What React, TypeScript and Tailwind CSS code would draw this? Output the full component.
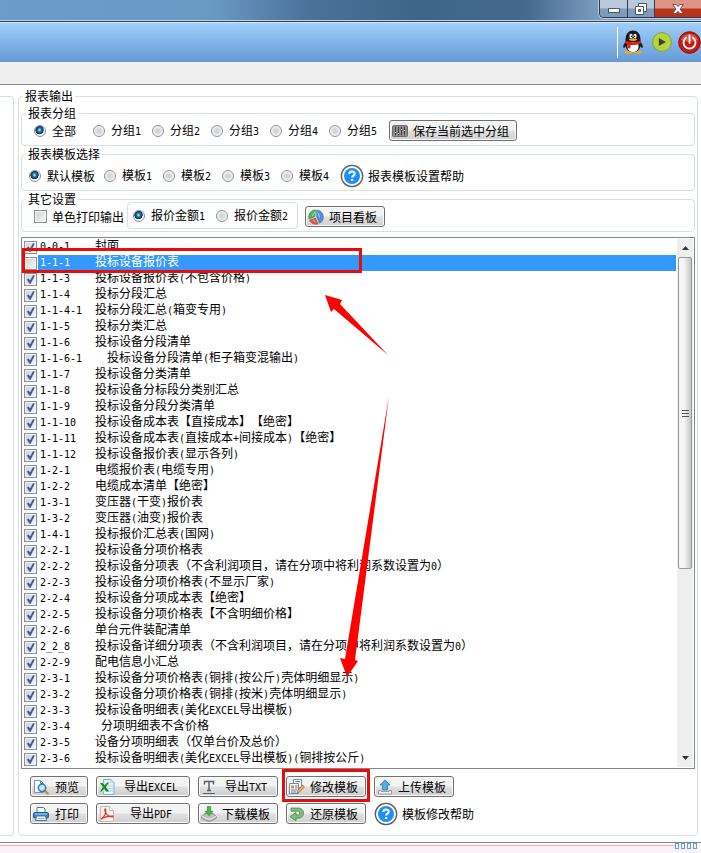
import React, { useId } from "react";

type Report = { code: string; name: string; checked?: boolean; selected?: boolean };

const reports: Report[] = [
  { code: "0-0-1", name: "封面" },
  { code: "1-1-1", name: "投标设备报价表", checked: false, selected: true },
  { code: "1-1-3", name: "投标设备报价表(不包含价格)" },
  { code: "1-1-4", name: "投标分段汇总" },
  { code: "1-1-4-1", name: "投标分段汇总(箱变专用)" },
  { code: "1-1-5", name: "投标分类汇总" },
  { code: "1-1-6", name: "投标设备分段清单" },
  { code: "1-1-6-1", name: "  投标设备分段清单(柜子箱变混输出)" },
  { code: "1-1-7", name: "投标设备分类清单" },
  { code: "1-1-8", name: "投标设备分标段分类别汇总" },
  { code: "1-1-9", name: "投标设备分段分类清单" },
  { code: "1-1-10", name: "投标设备成本表【直接成本】【绝密】" },
  { code: "1-1-11", name: "投标设备成本表(直接成本+间接成本)【绝密】" },
  { code: "1-1-12", name: "投标设备报价表(显示各列)" },
  { code: "1-2-1", name: "电缆报价表(电缆专用)" },
  { code: "1-2-2", name: "电缆成本清单【绝密】" },
  { code: "1-3-1", name: "变压器(干变)报价表" },
  { code: "1-3-2", name: "变压器(油变)报价表" },
  { code: "1-4-1", name: "投标报价汇总表(国网)" },
  { code: "2-2-1", name: "投标设备分项价格表" },
  { code: "2-2-2", name: "投标设备分项表（不含利润项目，请在分项中将利润系数设置为0）" },
  { code: "2-2-3", name: "投标设备分项价格表(不显示厂家)" },
  { code: "2-2-4", name: "投标设备分项成本表【绝密】" },
  { code: "2-2-5", name: "投标设备分项价格表【不含明细价格】" },
  { code: "2-2-6", name: "单台元件装配清单" },
  { code: "2_2_8", name: "投标设备详细分项表（不含利润项目，请在分项中将利润系数设置为0）" },
  { code: "2-2-9", name: "配电信息小汇总" },
  { code: "2-3-1", name: "投标设备分项价格表(铜排(按公斤)壳体明细显示)" },
  { code: "2-3-2", name: "投标设备分项价格表(铜排(按米)壳体明细显示)" },
  { code: "2-3-3", name: "投标设备明细表(美化EXCEL导出模板)" },
  { code: "2-3-4", name: " 分项明细表不含价格" },
  { code: "2-3-5", name: "设备分项明细表（仅单台价及总价）" },
  { code: "2-3-6", name: "投标设备明细表(美化EXCEL导出模板)(铜排按公斤)" },
];

/* Sets ASCII runs in a half-width face so they keep to the CJK character grid. */
function Mixed({ text }: { text: string }) {
  return (
    <span className="whitespace-pre">
      {text.split(/([\x20-\x7e]+)/).map((part, i) =>
        i % 2 ? (
          <span key={i} className="font-['DejaVu_Sans_Mono',monospace] text-[10px]">{part}</span>
        ) : (
          part
        ),
      )}
    </span>
  );
}

function Radio({ group, label, checked, className = "" }: { group: string; label: string; checked?: boolean; className?: string }) {
  const id = useId();
  return (
    <div className={`flex shrink-0 items-center gap-1.5 ${className}`}>
      <input
        id={id}
        type="radio"
        name={group}
        defaultChecked={checked}
        className="size-3 shrink-0 appearance-none rounded-full border border-[#8a8f94] bg-[radial-gradient(circle,#d2d5d8_0_25%,#eceeef_60%,#fff_75%)] checked:bg-[radial-gradient(circle_at_45%_40%,#8fd6f4_0_8%,#1c6f9f_25%,#0d3453_48%,#e8eef2_54%,#fff_75%)]"
      />
      <label htmlFor={id}><Mixed text={label} /></label>
    </div>
  );
}

function Check({ id, label, checked }: { id?: string; label?: string; checked?: boolean }) {
  return (
    <span className="relative block size-[13px] shrink-0">
      <input
        id={id}
        type="checkbox"
        aria-label={label}
        defaultChecked={checked}
        className="peer block size-[13px] appearance-none border border-[#8e8f8f] bg-linear-to-br from-[#cfd3d9] to-[#f6f6f6] shadow-[inset_0_0_0_1px_#f4f4f4]"
      />
      <svg viewBox="0 0 13 13" className="pointer-events-none absolute inset-0 hidden size-[13px] peer-checked:block" aria-hidden="true">
        <path d="M2.800 6.400 4.600 5.400 6 7.600 9 2.200 10.800 2.400 6.700 10.800 5.300 10.800Z" fill="#3f5a9e" />
      </svg>
    </span>
  );
}

function Group({ title, children }: { title: string; children: React.ReactNode }) {
  return (
    <fieldset className="min-w-0 rounded-[4px] border border-[#d5dfe5]">
      <legend className="ml-1 h-3.5 px-0.5 leading-[14px]">{title}</legend>
      {children}
    </fieldset>
  );
}

function WinButton({ icon, label, className = "" }: { icon: React.ReactNode; label: string; className?: string }) {
  return (
    <button
      type="button"
      className={`flex h-[21px] items-center rounded-[3px] border border-[#707070] bg-linear-to-b from-[#f3f3f3] from-45% via-[#dfdfdf] via-55% to-[#cfcfcf] px-0.5 shadow-[inset_0_0_0_1px_#fafafa] ${className}`}
    >
      {icon}
      <span className="flex-1 text-center leading-4"><Mixed text={label} /></span>
    </button>
  );
}

function Svg({ children, className = "size-4" }: { children: React.ReactNode; className?: string }) {
  return (
    <svg viewBox="0 0 16 16" className={`shrink-0 ${className}`} aria-hidden="true">
      {children}
    </svg>
  );
}

const EqualizerIcon = () => (
  <Svg>
    <rect x=".5" y="2.5" width="15" height="11" rx="1" fill="#8b8b8b" stroke="#6c6c6c" />
    <path d="M3.5 4v8M6.5 4v8M9.5 4v8M12.5 4v8" stroke="#444" />
    <path d="M3 9.5h1M6 10.5h1M9 6.5h1M12 7.5h1" stroke="#eee" />
  </Svg>
);

const PieIcon = () => (
  <Svg>
    <path d="M7 7.5 1 10A7 7 0 0 1 7.5.8Z" fill="#4bb558" stroke="#2d8a3c" strokeWidth=".5" />
    <path d="M8.6 1A7 7 0 0 1 11.5 14.2L8.6 8Z" fill="#4d8fd8" stroke="#2c62a8" strokeWidth=".5" />
    <path d="M7.4 9 10 15A7 7 0 0 1 1.5 11.2Z" fill="#e25648" stroke="#b0322a" strokeWidth=".5" />
    <path d="M7 3 4 7M10 3.5l1.5 5M5 11l2.5 2" stroke="#fff" strokeOpacity=".6" />
  </Svg>
);

const PreviewIcon = () => (
  <Svg>
    <path d="M1.5 1.5h6l3 3v9h-9z" fill="#fff" stroke="#7291b5" />
    <path d="M7.5 1.5v3h3" fill="none" stroke="#7291b5" />
    <path d="m11.8 11.6 3 3" stroke="#d98a25" strokeWidth="2.2" strokeLinecap="round" />
    <circle cx="9" cy="8.8" r="3.7" fill="#bfe6fb" stroke="#2a7bc7" strokeWidth="1.5" />
  </Svg>
);

const PrinterIcon = () => (
  <Svg>
    <path d="M4 6.5V1.5h6.5l1.5 1.5v3.5z" fill="#fff" stroke="#47729e" />
    <rect x=".6" y="6.5" width="14.8" height="5.5" rx="1" fill="#3c87cd" stroke="#205687" />
    <path d="M2 8h12" stroke="#a8d6f7" />
    <path d="M3.5 10h9l1 4.5h-11z" fill="#f5f9fd" stroke="#47729e" />
    <path d="M4.5 12.5h7" stroke="#8aa9c6" />
  </Svg>
);

const ExcelIcon = () => (
  <Svg>
    <path d="M4.5.5h7.5l3 3v12H4.5z" fill="#e8f3fb" stroke="#86a9c9" />
    <path d="M12 .5v3h3M10 7h4M10 9.5h4M10 12h4" fill="none" stroke="#a9cfe6" />
    <rect x=".5" y="3.5" width="9.5" height="9" fill="#cfe8cf" />
    <path d="M1 4h3l1.5 2.2L8.5 3.5H10L6.8 8l3.4 4.5H7L5.2 9.8 2.6 12.5H1L4 8Z" fill="#25803a" />
  </Svg>
);

const PdfIcon = () => (
  <Svg>
    <path d="M1.5.5h9l4 4v11h-13z" fill="#f7f2ee" stroke="#c2b9b3" />
    <path d="M10.5.5v4h4" fill="#fff" stroke="#c2b9b3" />
    <path d="M2 13c3.5-2 5-6 4.8-9.5 0-1-1.3-.5-1 .8C6.5 8 9 10.5 13.5 11c1 0 .6-1.3-.7-1.2C8.5 10 5.5 10.8 2 13Z" fill="none" stroke="#d93a30" strokeWidth="1.2" />
  </Svg>
);

const UnderlineIcon = () => (
  <Svg>
    <path d="M3.5 5.5V2.5h9v3M8 2.5v9M6 11.5h4" fill="none" stroke="#56606e" strokeWidth="1.5" />
    <path d="M2 14.5h12" stroke="#56606e" />
  </Svg>
);

const EditIcon = () => (
  <Svg>
    <path d="M4.5.5h8v8h-8z" fill="#fff" stroke="#6c94c4" />
    <path d="M.5 4.5h9v10h-9z" fill="#fdf8f0" stroke="#7c8ea6" />
    <path d="M2 6.5h3v3H2z" fill="#e0923c" />
    <path d="M6 7h2.5M6 9h2.5M2 11h6M2 13h5M6.5 2.5H11" stroke="#4f7fbb" />
    <path d="m8 14 .8-2.8L13.600 6l1.900 1.800-4.900 5.200Z" fill="#f2b25b" stroke="#a05f22" strokeWidth=".7" />
  </Svg>
);

const DownloadIcon = () => (
  <Svg>
    <path d="M.7 10.5 4 7.5h8l3.3 3v1.700L9.500 15.300H7L.7 12.500Z" fill="#b9bcc0" stroke="#77797c" strokeWidth=".7" />
    <path d="M1 10.5 7.5 13h1.800L15 10.500" fill="none" stroke="#f1f1f1" />
    <path d="M6.300.5h3.400v4.700h2.300L8 9.700 4 5.200h2.300Z" fill="#43b649" stroke="#268a30" strokeWidth=".6" />
  </Svg>
);

const RestoreIcon = () => (
  <Svg>
    <path d="M2 2h7.500a5 5 0 0 1 0 10.200H7V15L1 10.600 7 6.500v2.600h2.300a2 2 0 0 0 0-3.900H2Z" fill="#7fbf7c" stroke="#3d8a44" strokeWidth=".8" />
  </Svg>
);

const UploadIcon = () => (
  <Svg>
    <path d="M8 .8 13 6h-2.500v5h-5V6H3Z" fill="#56aee0" stroke="#2b78ae" strokeWidth=".8" />
    <path d="M1.500 11.500h2.500v1h8v-1h2.500v3.500h-13z" fill="#eee" stroke="#8b8f94" strokeWidth=".8" />
  </Svg>
);

function HelpLink({ text }: { text: string }) {
  return (
    <a href="#help" className="flex shrink-0 items-center gap-1">
      <svg viewBox="0 0 24 24" className="size-6 shrink-0" aria-hidden="true">
        <circle cx="12" cy="12" r="10.7" fill="#fff" stroke="#555a60" strokeWidth="1.3" />
        <circle cx="12" cy="12" r="8" fill="#1e90f5" />
        <path d="M9.300 10c0-3.300 5.400-3.200 5.400-.3 0 1.900-2.600 1.900-2.600 3.900" fill="none" stroke="#fff" strokeWidth="2" />
        <path d="M11 15h2.200v2H11z" fill="#fff" />
      </svg>
      <span>{text}</span>
    </a>
  );
}

function TitleBar() {
  const base = "flex h-[17px] items-center justify-center border-r border-[#2f3b49]";
  return (
    <header className="flex h-[21px] justify-end border-b border-[#c3d3e4] bg-[linear-gradient(to_right,#6d9bca_0%,#6b99c6_30%,#4b7299_44%,#3f648a_60%,#45698e_75%,#7d9fc2_86%,#7a9cbf_100%)]">
      <div className="flex h-[18px] w-[102px] overflow-hidden rounded-bl-[5px] border-b border-l border-[#2f3b49] shadow-[0_0_0_1px_#b9cbdd]">
        <button type="button" aria-label="最小化" className={`${base} w-7 bg-linear-to-b from-[#b8c9dc] from-45% to-[#7f9bb9] to-55%`}>
          <svg viewBox="0 0 12 6" className="mt-1 h-1.5 w-3"><rect x=".5" y=".5" width="11" height="4" fill="#fff" stroke="#4d5866" /></svg>
        </button>
        <button type="button" aria-label="还原" className={`${base} w-[27px] bg-linear-to-b from-[#b8c9dc] from-45% to-[#7f9bb9] to-55%`}>
          <svg viewBox="0 0 12 12" className="size-3">
            <path d="M3.5.5h8v8h-8z" fill="#fff" stroke="#4d5866" />
            <path d="M.5 3.5h8v8h-8z" fill="#fff" stroke="#4d5866" />
            <path d="M3.5 6.5h2v2h-2z" fill="#8aa0b8" stroke="#4d5866" />
          </svg>
        </button>
        <button type="button" aria-label="关闭" className="flex h-[17px] flex-1 items-center justify-center bg-linear-to-b from-[#dc9488] from-45% to-[#b8321c] to-55%">
          <svg viewBox="0 0 12 10" className="h-2.5 w-3"><path d="M.7.5h3.500L6 2.700 7.800.5h3.500L8 5l3.300 4.500H7.800L6 7.300 4.200 9.500H.7L4 5Z" fill="#fff" stroke="#5a3c42" strokeWidth=".8" /></svg>
        </button>
      </div>
    </header>
  );
}

function Toolbar() {
  return (
    <div className="flex h-[41px] items-center justify-end border-t border-[#2c4159] bg-linear-to-b from-[#a2d0fc] to-[#669ad6] shadow-[inset_0_1px_0_#d9ecff]">
      <div className="flex h-[31px] items-center border-l border-white pl-1">
        <button type="button" aria-label="QQ">
          <svg viewBox="0 0 22 24" className="block h-6 w-[22px]">
            <path d="M4.500 11C2 13 .5 16 1.500 18c1 0 2-1.500 2.500-2.500M17.500 11c2.500 2 4 5 3 7-1 0-2-1.500-2.500-2.500" fill="#15181d" />
            <ellipse cx="6.500" cy="22" rx="4.200" ry="1.800" fill="#f4a81c" />
            <ellipse cx="15.500" cy="22" rx="4.200" ry="1.800" fill="#f4a81c" />
            <ellipse cx="11" cy="15" rx="7.500" ry="7.300" fill="#15181d" />
            <ellipse cx="11" cy="16.500" rx="5.600" ry="5.500" fill="#fff" />
            <path d="M3.500 9.500C3.500-2.500 18.500-2.500 18.500 9.500v2.500h-15Z" fill="#15181d" />
            <ellipse cx="9" cy="6" rx="1.600" ry="2.200" fill="#fff" />
            <ellipse cx="13" cy="6" rx="1.600" ry="2.200" fill="#fff" />
            <circle cx="9.500" cy="6.300" r=".7" />
            <circle cx="12.500" cy="6.300" r=".7" />
            <ellipse cx="11" cy="9.600" rx="4" ry="1.300" fill="#f4a81c" />
            <path d="M3.500 10.500c4 2.300 11 2.300 15 0l.6 2.400c-3 2-8.600 2.400-10.600 2V18.500l-3-.3v-4L2.900 12.900Z" fill="#e0201b" />
          </svg>
        </button>
        <button type="button" aria-label="播放" className="ml-2">
          <svg viewBox="0 0 20 20" className="block size-5">
            <circle cx="10" cy="10" r="9.400" fill="#b5d443" stroke="#83a22c" />
            <path d="M6.800 6v8l7.200-4Z" fill="#3b4a17" />
          </svg>
        </button>
        <button type="button" aria-label="退出" className="ml-1.5">
          <svg viewBox="0 0 23 23" className="block size-[23px]">
            <circle cx="11.500" cy="11.500" r="10.800" fill="#c81a10" stroke="#7c1710" />
            <path d="M3 9a9 9 0 0 1 17 0c-5 2-12 2-17 0Z" fill="#f08a7c" fillOpacity=".55" />
            <path d="M8 6.700a6 6 0 1 0 7 0M11.500 4.500v7.500" fill="none" stroke="#fff" strokeWidth="1.800" strokeLinecap="round" />
          </svg>
        </button>
      </div>
    </div>
  );
}

function ReportRow({ report }: { report: Report }) {
  return (
    <li className="flex h-4 items-center pl-px">
      <Check label={report.code} checked={report.checked !== false} />
      <div className={`ml-px flex h-4 flex-1 items-start pl-0.5 leading-3 ${report.selected ? "bg-[#3399ff] text-white" : ""}`}>
        <span className="w-[55px] shrink-0"><Mixed text={report.code} /></span>
        <Mixed text={report.name} />
      </div>
    </li>
  );
}

function ScrollBar() {
  return (
    <div className="ml-px flex w-4 shrink-0 flex-col items-center bg-[#efefef]">
      <button type="button" aria-label="向上滚动" className="flex h-[18px] w-4 items-center justify-center">
        <svg viewBox="0 0 7 4" className="h-1 w-[7px]"><path d="M0 4 3.500 0 7 4Z" fill="#333" /></svg>
      </button>
      <div className="flex h-[312px] w-3.5 flex-col items-center justify-center gap-0.5 rounded-[2px] border border-[#979797] bg-linear-to-r from-[#f6f6f6] from-40% to-[#c6c6c6]">
        <i className="h-px w-[7px] bg-[#555]" />
        <i className="h-px w-[7px] bg-[#555]" />
        <i className="h-px w-[7px] bg-[#555]" />
      </div>
      <button type="button" aria-label="向下滚动" className="mt-auto flex h-[18px] w-4 items-center justify-center">
        <svg viewBox="0 0 7 4" className="h-1 w-[7px]"><path d="M0 0h7L3.500 4Z" fill="#333" /></svg>
      </button>
    </div>
  );
}

function Arrows() {
  return (
    <svg viewBox="0 0 80 400" className="pointer-events-none absolute left-[298px] top-[52px] h-[400px] w-20" aria-hidden="true">
      <path d="M5 5 22 10 20 14 68 65 14 19 11 22Z" fill="#f00" />
      <path d="M69 106 35 370 38 371 27 387 20 368 25 369Z" fill="#f00" />
    </svg>
  );
}

export default function App() {
  const monoId = useId();
  return (
    <div className="flex min-h-screen flex-col overflow-x-hidden bg-white font-['Noto_Sans_CJK_SC','Liberation_Sans',sans-serif] text-[12px] leading-4 text-black [text-spacing-trim:space-all]">
      <TitleBar />
      <Toolbar />
      <div className="h-[23px] border-b border-[#828790] bg-[#efefef]" />

      <main className="flex pt-1">
        <div className="mt-[7px] w-3.5 shrink-0 rounded-tr-[4px] rounded-br-[4px] border-y border-r border-[#d5dfe5]" />
        <fieldset className="ml-1 mr-[3px] min-w-0 flex-1 rounded-[4px] border border-[#d5dfe5] px-0.5 pb-[11px]">
          <legend className="ml-0.5 h-3.5 px-0.5 leading-[14px]">报表输出</legend>

          <div className="flex flex-col gap-px pt-[3px]">
            <Group title="报表分组">
              <div className="flex h-[25px] items-start pl-3">
                <Radio group="group" label="全部" checked className="h-[21px] w-[59px]" />
                <Radio group="group" label="分组1" className="h-[21px] w-[59px]" />
                <Radio group="group" label="分组2" className="h-[21px] w-[59px]" />
                <Radio group="group" label="分组3" className="h-[21px] w-[59px]" />
                <Radio group="group" label="分组4" className="h-[21px] w-[59px]" />
                <Radio group="group" label="分组5" className="h-[21px] w-[59px]" />
                <WinButton icon={<EqualizerIcon />} label="保存当前选中分组" className="ml-px w-32 shrink-0" />
              </div>
            </Group>
            <Group title="报表模板选择">
              <div className="flex h-[29px] items-center pl-[7px]">
                <Radio group="template" label="默认模板" checked className="w-[75px]" />
                <Radio group="template" label="模板1" className="w-[59px]" />
                <Radio group="template" label="模板2" className="w-[59px]" />
                <Radio group="template" label="模板3" className="w-[59px]" />
                <Radio group="template" label="模板4" className="w-[59px]" />
                <HelpLink text="报表模板设置帮助" />
              </div>
            </Group>
            <Group title="其它设置">
              <div className="-mt-1 flex h-[29px] items-start pl-3">
                <div className="flex h-[29px] w-[93px] shrink-0 items-center gap-[5px]">
                  <Check id={monoId} />
                  <label htmlFor={monoId} className="whitespace-nowrap">单色打印输出</label>
                </div>
                <div className="flex h-[27px] w-[171px] shrink-0 items-center rounded-[4px] border border-[#d5dfe5] pl-[5px]">
                  <Radio group="price" label="报价金额1" checked className="w-[83px]" />
                  <Radio group="price" label="报价金额2" />
                </div>
                <WinButton icon={<PieIcon />} label="项目看板" className="ml-[7px] mt-1 w-20 shrink-0" />
              </div>
            </Group>
          </div>

          <div className="relative mt-[5px] flex border border-[#828790] p-px">
            <ul className="min-w-0 flex-1">
              {reports.map((report) => (
                <ReportRow key={report.code} report={report} />
              ))}
            </ul>
            <ScrollBar />
            <div className="pointer-events-none absolute left-0 top-[10px] h-[25px] w-[340px] border-3 border-[#e60d0d]" />
            <Arrows />
          </div>

          <div className="mt-[7px] grid grid-cols-[58px_94px_80px_80px_1fr] gap-x-2 gap-y-1.5 pl-[9px]">
            <WinButton icon={<PreviewIcon />} label="预览" />
            <WinButton icon={<ExcelIcon />} label="导出EXCEL" />
            <WinButton icon={<UnderlineIcon />} label="导出TXT" />
            <div className="relative flex">
              <WinButton icon={<EditIcon />} label="修改模板" className="w-20" />
              <div className="pointer-events-none absolute -inset-x-1 -top-[7px] -bottom-[5px] border-3 border-[#e60d0d]" />
            </div>
            <WinButton icon={<UploadIcon />} label="上传模板" className="w-20" />
            <WinButton icon={<PrinterIcon />} label="打印" />
            <WinButton icon={<PdfIcon />} label="导出PDF" />
            <WinButton icon={<DownloadIcon />} label="下载模板" />
            <WinButton icon={<RestoreIcon />} label="还原模板" />
            <div className="flex h-[21px] items-center"><HelpLink text="模板修改帮助" /></div>
          </div>
        </fieldset>
      </main>

      <footer className="mt-1.5 flex flex-1 items-start justify-end border-t border-[#828790] bg-linear-to-b from-white from-[1px] to-[#fdf1f8] to-[1px]">
        <div className="flex h-[3px] flex-1 border-b border-[#e6b9cf]" />
        <div className="mr-1 flex gap-0.5">
          <i className="h-1.5 w-1 border border-[#58a6d6]" />
          <i className="h-1.5 w-1 border border-[#58a6d6]" />
          <i className="h-1.5 w-1 border border-[#58a6d6]" />
          <i className="h-1.5 w-1 border border-[#58a6d6]" />
        </div>
      </footer>
    </div>
  );
}
